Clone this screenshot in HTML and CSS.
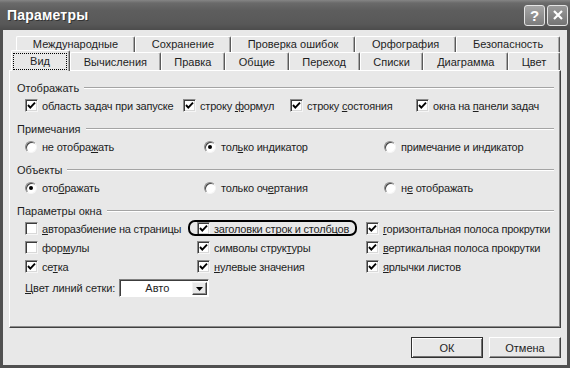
FILE: index.html
```html
<!DOCTYPE html>
<html lang="ru">
<head>
<meta charset="utf-8">
<title>Параметры</title>
<link rel="stylesheet" href="styles.css">
</head>
<body>
<div class="window">
  <div class="titlebar">
    <span class="title">Параметры</span>
    <div class="tb-buttons">
      <span class="tb-btn">?</span>
      <span class="tb-btn close">
        <svg viewBox="0 0 12 12" width="12" height="12"><path d="M2 2 L10 10 M10 2 L2 10" stroke="#fff" stroke-width="2.2" fill="none"/></svg>
      </span>
    </div>
  </div>
  <div class="client">
    <div class="tabs">
      <div class="tab-row back">
        <div class="tab">Международные</div>
        <div class="tab">Сохранение</div>
        <div class="tab">Проверка ошибок</div>
        <div class="tab">Орфография</div>
        <div class="tab">Безопасность</div>
      </div>
      <div class="tab-row front">
        <div class="tab selected"><span class="focus">Вид</span></div>
        <div class="tab">Вычисления</div>
        <div class="tab">Правка</div>
        <div class="tab">Общие</div>
        <div class="tab">Переход</div>
        <div class="tab">Списки</div>
        <div class="tab">Диаграмма</div>
        <div class="tab">Цвет</div>
      </div>
    </div>
    <div class="panel">
      <div class="group">
        <div class="group-title"><span>Отображать</span><span class="etch"></span></div>
        <div class="row cols-show">
          <label class="item"><span class="cb"><svg viewBox="0 0 11 11"><path d="M2 5 L4.3 7.6 L9 2.6"/></svg></span><span class="lbl">область задач при запуске</span></label>
          <label class="item"><span class="cb"><svg viewBox="0 0 11 11"><path d="M2 5 L4.3 7.6 L9 2.6"/></svg></span><span class="lbl">строку <u>ф</u>ормул</span></label>
          <label class="item"><span class="cb"><svg viewBox="0 0 11 11"><path d="M2 5 L4.3 7.6 L9 2.6"/></svg></span><span class="lbl">строку <u>с</u>остояния</span></label>
          <label class="item"><span class="cb"><svg viewBox="0 0 11 11"><path d="M2 5 L4.3 7.6 L9 2.6"/></svg></span><span class="lbl">окна на <u>п</u>анели задач</span></label>
        </div>
      </div>
      <div class="group">
        <div class="group-title"><span>Примечания</span><span class="etch"></span></div>
        <div class="row cols-radio">
          <label class="item"><span class="rb"></span><span class="lbl">не отобра<u>ж</u>ать</span></label>
          <label class="item"><span class="rb on"></span><span class="lbl">тол<u>ь</u>ко индикатор</span></label>
          <label class="item"><span class="rb"></span><span class="lbl">примечание и ин<u>д</u>икатор</span></label>
        </div>
      </div>
      <div class="group">
        <div class="group-title"><span>Объекты</span><span class="etch"></span></div>
        <div class="row cols-radio">
          <label class="item"><span class="rb on"></span><span class="lbl">ото<u>б</u>ражать</span></label>
          <label class="item"><span class="rb"></span><span class="lbl">только оч<u>е</u>ртания</span></label>
          <label class="item"><span class="rb"></span><span class="lbl">н<u>е</u> отображать</span></label>
        </div>
      </div>
      <div class="group last">
        <div class="group-title"><span>Параметры окна</span><span class="etch"></span></div>
        <div class="row cols-win">
          <label class="item"><span class="cb"></span><span class="lbl"><u>а</u>вторазбиение на страницы</span></label>
          <label class="item highlight"><span class="cb"><svg viewBox="0 0 11 11"><path d="M2 5 L4.3 7.6 L9 2.6"/></svg></span><span class="lbl"><u>з</u>аголовки строк и столбцов</span></label>
          <label class="item"><span class="cb"><svg viewBox="0 0 11 11"><path d="M2 5 L4.3 7.6 L9 2.6"/></svg></span><span class="lbl"><u>г</u>оризонтальная полоса прокрутки</span></label>
        </div>
        <div class="row cols-win">
          <label class="item"><span class="cb"></span><span class="lbl">фор<u>м</u>улы</span></label>
          <label class="item"><span class="cb"><svg viewBox="0 0 11 11"><path d="M2 5 L4.3 7.6 L9 2.6"/></svg></span><span class="lbl">символы струк<u>т</u>уры</span></label>
          <label class="item"><span class="cb"><svg viewBox="0 0 11 11"><path d="M2 5 L4.3 7.6 L9 2.6"/></svg></span><span class="lbl"><u>в</u>ертикальная полоса прокрутки</span></label>
        </div>
        <div class="row cols-win">
          <label class="item"><span class="cb"><svg viewBox="0 0 11 11"><path d="M2 5 L4.3 7.6 L9 2.6"/></svg></span><span class="lbl">се<u>т</u>ка</span></label>
          <label class="item"><span class="cb"><svg viewBox="0 0 11 11"><path d="M2 5 L4.3 7.6 L9 2.6"/></svg></span><span class="lbl"><u>н</u>улевые значения</span></label>
          <label class="item"><span class="cb"><svg viewBox="0 0 11 11"><path d="M2 5 L4.3 7.6 L9 2.6"/></svg></span><span class="lbl"><u>я</u>рлычки листов</span></label>
        </div>
        <div class="grid-color">
          <span class="gc-label"><u>Ц</u>вет линий сетки:</span>
          <div class="select">
            <span class="select-value">Авто</span>
            <span class="select-btn"><svg viewBox="0 0 7 4" width="7" height="4"><path d="M0 0 H7 L3.5 4 Z" fill="#000"/></svg></span>
          </div>
        </div>
      </div>
    </div>
    <div class="buttons">
      <button class="btn default">ОК</button>
      <button class="btn">Отмена</button>
    </div>
  </div>
</div>
</body>
</html>
```
FILE: styles.css
```css
* { box-sizing: border-box; }
html, body { margin: 0; padding: 0; }
body {
  width: 570px;
  height: 368px;
  background: #bdbdbd;
  font-family: "Liberation Sans", Arial, sans-serif;
  font-size: 11px;
  color: #1e1e1e;
  overflow: hidden;
}
u { text-decoration: underline; text-underline-offset: 1px; }

.window {
  width: 570px;
  height: 368px;
  display: flex;
  flex-direction: column;
  background: #505050;
}

.titlebar {
  height: 30px;
  flex: none;
  display: flex;
  align-items: center;
  justify-content: space-between;
  padding: 0 2px 0 7px;
  background: linear-gradient(#858585 0, #6a6a6a 3px, #5e5e5e 10px, #585858 24px, #4c4c4c 30px);
}
.title {
  color: #fff;
  font-weight: bold;
  font-size: 14px;
  text-shadow: 1px 1px 0 #333;
  letter-spacing: 0.2px;
}
.tb-buttons { display: flex; gap: 2px; }
.tb-btn {
  width: 21px;
  height: 21px;
  border: 1px solid #e4e4e4;
  border-radius: 3px;
  background: linear-gradient(#a6a6a6, #7c7c7c);
  color: #fff;
  display: flex;
  align-items: center;
  justify-content: center;
  font-weight: bold;
  font-size: 15px;
}
.tb-btn.close { background: linear-gradient(#9a9a9a, #747474); }

.client {
  flex: 1;
  margin: 0 3px 3px 3px;
  background: #e8e8e8;
  padding: 6px 6px 0 6px;
  display: flex;
  flex-direction: column;
}

.tabs { display: flex; flex-direction: column; }
.tab-row { display: flex; }
.tab-row.back { margin: 0 1px 0 7px; height: 16px; }
.tab-row.front { margin: 0 1px 0 2px; height: 18px; }
.tab {
  flex: 1 1 auto;
  text-align: center;
  white-space: nowrap;
  border-top: 1px solid #fff;
  border-left: 1px solid #fff;
  border-right: 1px solid #5a5a5a;
  border-radius: 2px 2px 0 0;
  box-shadow: inset -1px 0 #a8a8a8;
  line-height: 15px;
  padding: 0 4px;
}
.tab-row.front .tab { line-height: 16px; padding-top: 1px; }
.tab-row.front .tab.selected {
  flex: 0 0 59px;
  margin-top: -2px;
  height: 21px;
  margin-bottom: -1px;
  background: #e8e8e8;
  position: relative;
  z-index: 1;
  padding: 2px 2px 1px 1px;
  display: flex;
}
.focus {
  flex: 1;
  border: 1px dotted #000;
  line-height: 14px;
}

.panel {
  height: 258px;
  flex: none;
  border-top: 1px solid #fff;
  border-left: 1px solid #fff;
  border-right: 1px solid #404040;
  border-bottom: 1px solid #404040;
  box-shadow: inset -1px -1px #8c8c8c;
  padding: 8px 6px 0 7px;
}

.group { margin-bottom: 5px; }
.group-title {
  display: flex;
  align-items: center;
  height: 17px;
  gap: 5px;
}
.etch {
  flex: 1;
  height: 2px;
  border-top: 1px solid #a4a4a4;
  border-bottom: 1px solid #fff;
}

.row {
  display: grid;
  height: 19px;
  align-items: center;
  padding-left: 8px;
}
.cols-show { grid-template-columns: 158px 107px 126px 1fr; }
.cols-radio { grid-template-columns: 179px 180px 1fr; }
.cols-win { grid-template-columns: 172px 169px 1fr; }

.item {
  display: flex;
  align-items: center;
  white-space: nowrap;
}
.lbl { letter-spacing: -0.2px; }
.highlight { position: relative; }
.highlight::before {
  content: "";
  position: absolute;
  left: -9px;
  right: 9px;
  top: -2px;
  bottom: -1px;
  border: 2px solid #000;
  border-radius: 7px;
}

.cb {
  width: 13px;
  height: 13px;
  flex: none;
  margin-right: 4px;
  background: #fff;
  border: 1px solid;
  border-color: #8a8a8a #f6f6f6 #f6f6f6 #8a8a8a;
  box-shadow: inset 1px 1px #3c3c3c, inset -1px -1px #d8d8d8;
  display: flex;
}
.cb svg { width: 11px; height: 11px; }
.cb path { fill: none; stroke: #000; stroke-width: 1.9; }

.rb {
  width: 12px;
  height: 12px;
  flex: none;
  margin-right: 5px;
  border-radius: 50%;
  background: #fff;
  border: 1px solid;
  border-color: #8a8a8a #f6f6f6 #f6f6f6 #8a8a8a;
  box-shadow: inset 1px 1px #444;
  display: flex;
  align-items: center;
  justify-content: center;
}
.rb.on::after {
  content: "";
  width: 4px;
  height: 4px;
  border-radius: 50%;
  background: #000;
}

.grid-color {
  display: flex;
  align-items: center;
  height: 18px;
  margin-top: 3px;
  padding-left: 8px;
  gap: 4px;
}
.gc-label { letter-spacing: -0.1px; }
.select {
  width: 90px;
  height: 18px;
  display: flex;
  background: #fff;
  border: 1px solid;
  border-color: #808080 #fff #fff #808080;
  box-shadow: inset 1px 1px #3c3c3c;
  padding: 2px 1px 1px 2px;
}
.select-value { flex: 1; text-align: center; line-height: 13px; }
.select-btn {
  width: 15px;
  height: 13px;
  flex: none;
  background: #e8e8e8;
  border: 1px solid;
  border-color: #f4f4f4 #404040 #404040 #f4f4f4;
  box-shadow: inset -1px -1px #8c8c8c;
  display: flex;
  align-items: center;
  justify-content: center;
}

.buttons {
  display: flex;
  justify-content: flex-end;
  gap: 6px;
  margin-top: 9px;
}
.btn {
  width: 72px;
  height: 21px;
  font-family: "Liberation Sans", Arial, sans-serif;
  font-size: 11px;
  color: #1e1e1e;
  background: #e8e8e8;
  border: 1px solid;
  border-color: #fff #404040 #404040 #fff;
  box-shadow: inset -1px -1px #8c8c8c;
  padding: 0;
}
.btn.default {
  border-color: #303030;
  box-shadow: inset 1px 1px #fff, inset -1px -1px #707070;
}
```
